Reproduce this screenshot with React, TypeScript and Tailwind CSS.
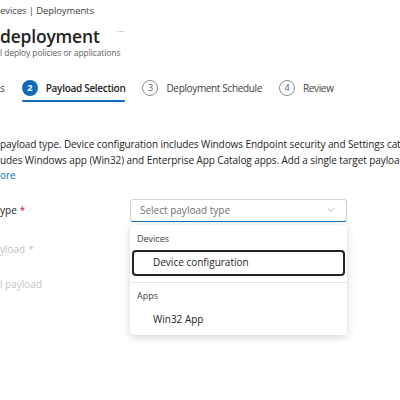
import React from 'react';
import { ChevronDown } from 'lucide-react';

const Step: React.FC<{ n: number; label: string; active?: boolean }> = ({ n, label, active }) => (
  <div className="relative flex items-center gap-[8px] h-full">
    <span
      className={
        active
          ? 'w-4 h-4 rounded-full bg-[#0f6cbd] text-white text-[9px] font-bold flex items-center justify-center'
          : 'w-4 h-4 rounded-full border border-[#8a8a8a] text-[#616161] text-[9px] flex items-center justify-center'
      }
    >
      {n}
    </span>
    <span className={active ? 'font-semibold text-[#242424] tracking-[-0.3px]' : 'text-[#424242] tracking-[-0.35px]'}>
      {label}
    </span>
    {active && <span className="absolute left-0 right-0 bottom-[-2px] h-[2px] bg-[#0f6cbd] rounded" />}
  </div>
);

export default function App() {
  return (
    <div
      className="w-[400px] h-[400px] overflow-hidden bg-white text-[#242424]"
      style={{ fontFamily: '"Open Sans", "Noto Sans", sans-serif' }}
    >
      <div className="pt-[4px] h-[18px] leading-[14px] text-[9.5px] tracking-[-0.1px] text-[#424242] whitespace-nowrap">
        evices | Deployments
      </div>
      <div className="relative mt-[8px] h-[21px] whitespace-nowrap">
        <h1 className="text-[17.5px] font-semibold leading-[20px] tracking-[-0.2px]">deployment</h1>
        <span className="absolute left-[117px] top-[1px] text-[#8a8a8a] text-[9px] leading-none">···</span>
      </div>
      <div className="h-[12px] leading-[12px] text-[8.5px] tracking-[-0.1px] text-[#616161] whitespace-nowrap">
        l deploy policies or applications
      </div>

      <div className="flex items-center h-[24px] mt-[17px] text-[10px] whitespace-nowrap gap-[17px]">
        <span className="text-[#424242]">s</span>
        <Step n={2} label="Payload Selection" active />
        <Step n={3} label="Deployment Schedule" />
        <Step n={4} label="Review" />
      </div>

      <div className="mt-[37px] text-[10px] leading-[15.5px] tracking-[-0.08px] text-[#242424] whitespace-nowrap">
        <div>payload type. Device configuration includes Windows Endpoint security and Settings cata</div>
        <div>udes Windows app (Win32) and Enterprise App Catalog apps. Add a single target payload</div>
        <div className="text-[#0f6cbd]">ore</div>
      </div>

      <div className="flex mt-[15px] text-[10px]">
        <div className="w-[130px] shrink-0 flex flex-col">
          <div className="h-[23px] flex items-center">
            ype <span className="text-[#c50f1f] ml-[3px]">*</span>
          </div>
          <div className="h-[18px] mt-[19px] flex items-center text-[#c4c4c4]">
            yload <span className="ml-[3px]">*</span>
          </div>
          <div className="h-[18px] mt-[17px] flex items-center text-[#c4c4c4]">l payload</div>
        </div>
        <div className="w-[217px] shrink-0">
          <div className="h-[23px] border border-[#d1d1d1] border-b-[#0f6cbd] rounded-[3px] flex items-center justify-between pl-[9px] pr-[9px] text-[#707070]">
            <span>Select payload type</span>
            <ChevronDown size={12} strokeWidth={1.1} className="text-[#707070]" />
          </div>
          <div className="mt-[3px] bg-white rounded-[4px] shadow-[0_2px_8px_rgba(0,0,0,0.18)] pt-[6px] pb-[2px] px-[2px]">
            <div className="text-[9px] text-[#424242] px-[5px] h-[16px] flex items-center">Devices</div>
            <div className="mt-[3px] h-[26px] border-2 border-[#242424] rounded-[4px] flex items-center pl-[19px] text-[#242424]">
              Device configuration
            </div>
            <div className="h-px bg-[#e6e6e6] mx-[-2px] mt-[6px]" />
            <div className="text-[9px] text-[#424242] px-[5px] h-[16px] mt-[5px] flex items-center">Apps</div>
            <div className="h-[26px] mt-[3px] flex items-center pl-[21px] text-[#242424]">Win32 App</div>
          </div>
        </div>
      </div>
    </div>
  );
}
